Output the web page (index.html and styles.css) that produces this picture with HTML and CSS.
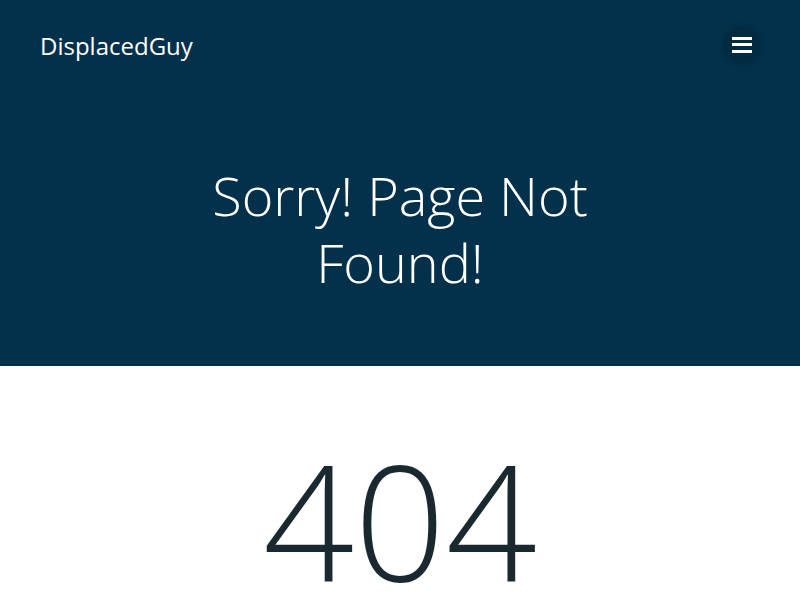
FILE: index.html
```html
<!DOCTYPE html>
<html>
<head>
<meta charset="utf-8">
<link rel="stylesheet" href="styles.css">
</head>
<body>
<section class="hero">
  <header class="topbar">
    <a class="brand">DisplacedGuy</a>
    <button class="menu-btn" aria-label="menu">
      <span class="bar"></span><span class="bar"></span><span class="bar"></span>
    </button>
  </header>
  <h1 class="title">Sorry! Page Not<br>Found!</h1>
</section>
<main class="content">
  <div class="code">404</div>
</main>
</body>
</html>
```
FILE: styles.css
```css
* { box-sizing: border-box; }
html, body { margin: 0; padding: 0; }
body {
  font-family: "Open Sans", "Liberation Sans", sans-serif;
  background: #ffffff;
  overflow: hidden;
}
.hero {
  background: #03304a;
  height: 366px;
  display: flex;
  flex-direction: column;
}
.topbar {
  display: flex;
  justify-content: space-between;
  align-items: center;
  padding: 28px 41px 0 40px;
  height: 62px;
}
.brand {
  color: #ffffff;
  font-size: 24px;
  font-weight: 400;
}
.menu-btn {
  width: 34px;
  height: 34px;
  border-radius: 50%;
  border: none;
  background: #022a40;
  box-shadow: 0 0 6px rgba(0,0,0,0.25);
  display: flex;
  flex-direction: column;
  align-items: center;
  justify-content: center;
  gap: 3.5px;
  padding: 0;
  margin-top: -1px;
}
.bar {
  display: block;
  width: 20px;
  height: 3px;
  background: #ffffff;
}
.title {
  margin: 0;
  padding-top: 100px;
  text-align: center;
  color: #ffffff;
  font-weight: 300;
  font-size: 54px;
  line-height: 67px;
}
.content {
  text-align: center;
}
.code {
  font-weight: 300;
  font-size: 160px;
  line-height: 1;
  color: #1a2930;
  padding-top: 73px;
}
```
